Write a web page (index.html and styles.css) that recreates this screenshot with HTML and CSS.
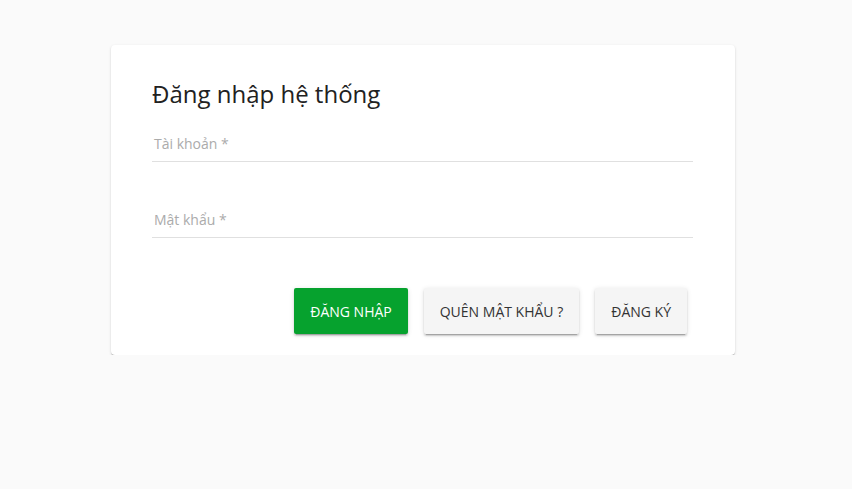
FILE: index.html
```html
<!DOCTYPE html>
<html lang="vi">
<head>
<meta charset="utf-8">
<title>Đăng nhập hệ thống</title>
<link rel="stylesheet" href="styles.css">
</head>
<body>
<div class="card">
  <h1 class="title">Đăng nhập hệ thống</h1>
  <div class="field">
    <label class="label">Tài khoản *</label>
  </div>
  <div class="field field-second">
    <label class="label">Mật khẩu *</label>
  </div>
  <div class="actions">
    <button class="btn btn-primary">Đăng nhập</button>
    <button class="btn">Quên mật khẩu ?</button>
    <button class="btn">Đăng ký</button>
  </div>
</div>
</body>
</html>
```
FILE: styles.css
```css
html, body {
  margin: 0;
  padding: 0;
  background: #fafafa;
  font-family: "Open Sans", "Liberation Sans", sans-serif;
}

body {
  padding-top: 45px;
}

.card {
  width: 624px;
  height: 310px;
  box-sizing: border-box;
  margin-left: 111px;
  padding: 33px 42px 0 41px;
  background: #fff;
  border-radius: 4px;
  box-shadow: 0 2px 1px -1px rgba(0,0,0,0.2), 0 1px 1px 0 rgba(0,0,0,0.14), 0 1px 3px 0 rgba(0,0,0,0.12);
}

.title {
  margin: 0;
  font-size: 24px;
  line-height: 32px;
  font-weight: 400;
  color: #212121;
}

.field {
  margin-top: 24px;
  height: 28px;
  box-sizing: border-box;
  border-bottom: 1px solid #e0e0e0;
}

.field-second {
  margin-top: 48px;
}

.label {
  display: block;
  padding-left: 2px;
  font-size: 14px;
  line-height: 20px;
  color: #ababab;
}

.actions {
  display: flex;
  justify-content: flex-end;
  gap: 16px;
  margin-top: 50px;
  padding-right: 6px;
}

.btn {
  height: 46px;
  padding: 0 16px;
  border: none;
  border-radius: 2px;
  background: #f5f5f5;
  color: #333;
  font-family: "Open Sans", "Liberation Sans", sans-serif;
  font-size: 14px;
  font-weight: 400;
  text-transform: uppercase;
  box-shadow: 0 3px 1px -2px rgba(0,0,0,0.2), 0 2px 2px 0 rgba(0,0,0,0.14), 0 1px 5px 0 rgba(0,0,0,0.12);
}

.btn-primary {
  background: #06a22e;
  color: #fff;
}
```
